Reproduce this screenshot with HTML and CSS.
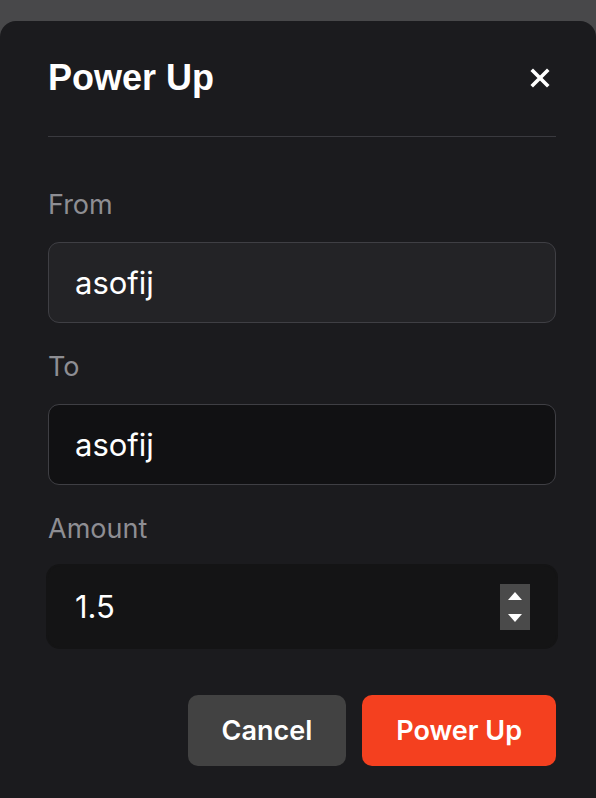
FILE: index.html
```html
<!DOCTYPE html>
<html lang="en">
<head>
    <meta charset="UTF-8">
    <meta name="viewport" content="width=device-width, initial-scale=1.0">
    <title>Power Up</title>
    <link rel="stylesheet" href="styles.css">
</head>
<body>
    <div class="modal">
        <div class="modal-header">
            <h1>Power Up</h1>
            <button class="close" type="button" aria-label="Close">
                <svg width="20" height="20" viewBox="0 0 20 20">
                    <path d="M3 3 L17 17 M17 3 L3 17" stroke="#fff" stroke-width="3.6" stroke-linecap="square" fill="none"/>
                </svg>
            </button>
        </div>

        <form class="power-form">
            <div class="field">
                <label for="from">From</label>
                <input type="text" id="from" class="input input-muted" value="asofij" readonly>
            </div>

            <div class="field">
                <label for="to">To</label>
                <input type="text" id="to" class="input" value="asofij">
            </div>

            <div class="field">
                <label for="amount">Amount</label>
                <div class="number-field">
                    <input type="number" id="amount" value="1.5" step="0.1">
                    <span class="spinner">
                        <span class="arrow up"></span>
                        <span class="arrow down"></span>
                    </span>
                </div>
            </div>

            <div class="actions">
                <button type="button" class="btn btn-cancel">Cancel</button>
                <button type="submit" class="btn btn-primary">Power Up</button>
            </div>
        </form>
    </div>
</body>
</html>
```

FILE: styles.css
```css
body {
    margin: 0;
    padding-top: 21px;
    background-color: #48484a;
    font-family: Inter, "Noto Sans", sans-serif;
    color: #fff;
}
.modal {
    background: #1b1b1e;
    border-radius: 16px 16px 0 0;
    padding: 37px 40px 40px 48px;
    min-height: 740px;
    box-sizing: border-box;
}
.modal-header {
    display: flex;
    justify-content: space-between;
    align-items: center;
    padding-bottom: 38px;
    border-bottom: 1px solid #3a3a3f;
}
h1 {
    margin: 0;
    font-family: "Liberation Sans", Arial, sans-serif;
    font-weight: bold;
    font-size: 36px;
    line-height: 40px;
}
.close {
    width: 32px;
    height: 32px;
    padding: 0;
    border: none;
    background: none;
    display: flex;
    align-items: center;
    justify-content: center;
    cursor: pointer;
}
.power-form {
    padding-top: 52px;
}
.field {
    margin-bottom: 28px;
}
label {
    display: block;
    font-size: 27px;
    line-height: 32px;
    color: #8e8e93;
    margin-bottom: 21px;
}
.input {
    display: block;
    width: 100%;
    height: 81px;
    box-sizing: border-box;
    padding: 0 26px;
    border: 1px solid #3f3f44;
    border-radius: 11px;
    background: #111113;
    color: #fff;
    font-family: inherit;
    font-size: 31px;
    outline: none;
}
.input-muted {
    background: #232326;
}
.number-field {
    display: flex;
    align-items: center;
    height: 81px;
    padding: 0 26px 0 27px;
    background: #141415;
    border-radius: 12px;
    box-shadow: 0 0 0 2px #141415;
}
.number-field input {
    flex: 1;
    min-width: 0;
    border: none;
    background: none;
    color: #fff;
    font-family: inherit;
    font-size: 31px;
    outline: none;
    padding: 0;
    -moz-appearance: textfield;
}
.number-field input::-webkit-inner-spin-button,
.number-field input::-webkit-outer-spin-button {
    -webkit-appearance: none;
    margin: 0;
}
.spinner {
    width: 30px;
    height: 46px;
    background: #4a4a4a;
    display: flex;
    flex-direction: column;
    align-items: center;
    justify-content: center;
    gap: 14px;
}
.arrow {
    width: 0;
    height: 0;
    border-left: 7px solid transparent;
    border-right: 7px solid transparent;
}
.arrow.up {
    border-bottom: 8px solid #fff;
}
.arrow.down {
    border-top: 8px solid #fff;
}
.actions {
    display: flex;
    justify-content: flex-end;
    gap: 16px;
    margin-top: 48px;
}
.btn {
    height: 71px;
    padding: 0 34px;
    border: none;
    border-radius: 10px;
    color: #fff;
    font-family: inherit;
    font-size: 27px;
    font-weight: 600;
    cursor: pointer;
}
.btn-cancel {
    background: #424242;
}
.btn-primary {
    background: #f4401f;
}
```
